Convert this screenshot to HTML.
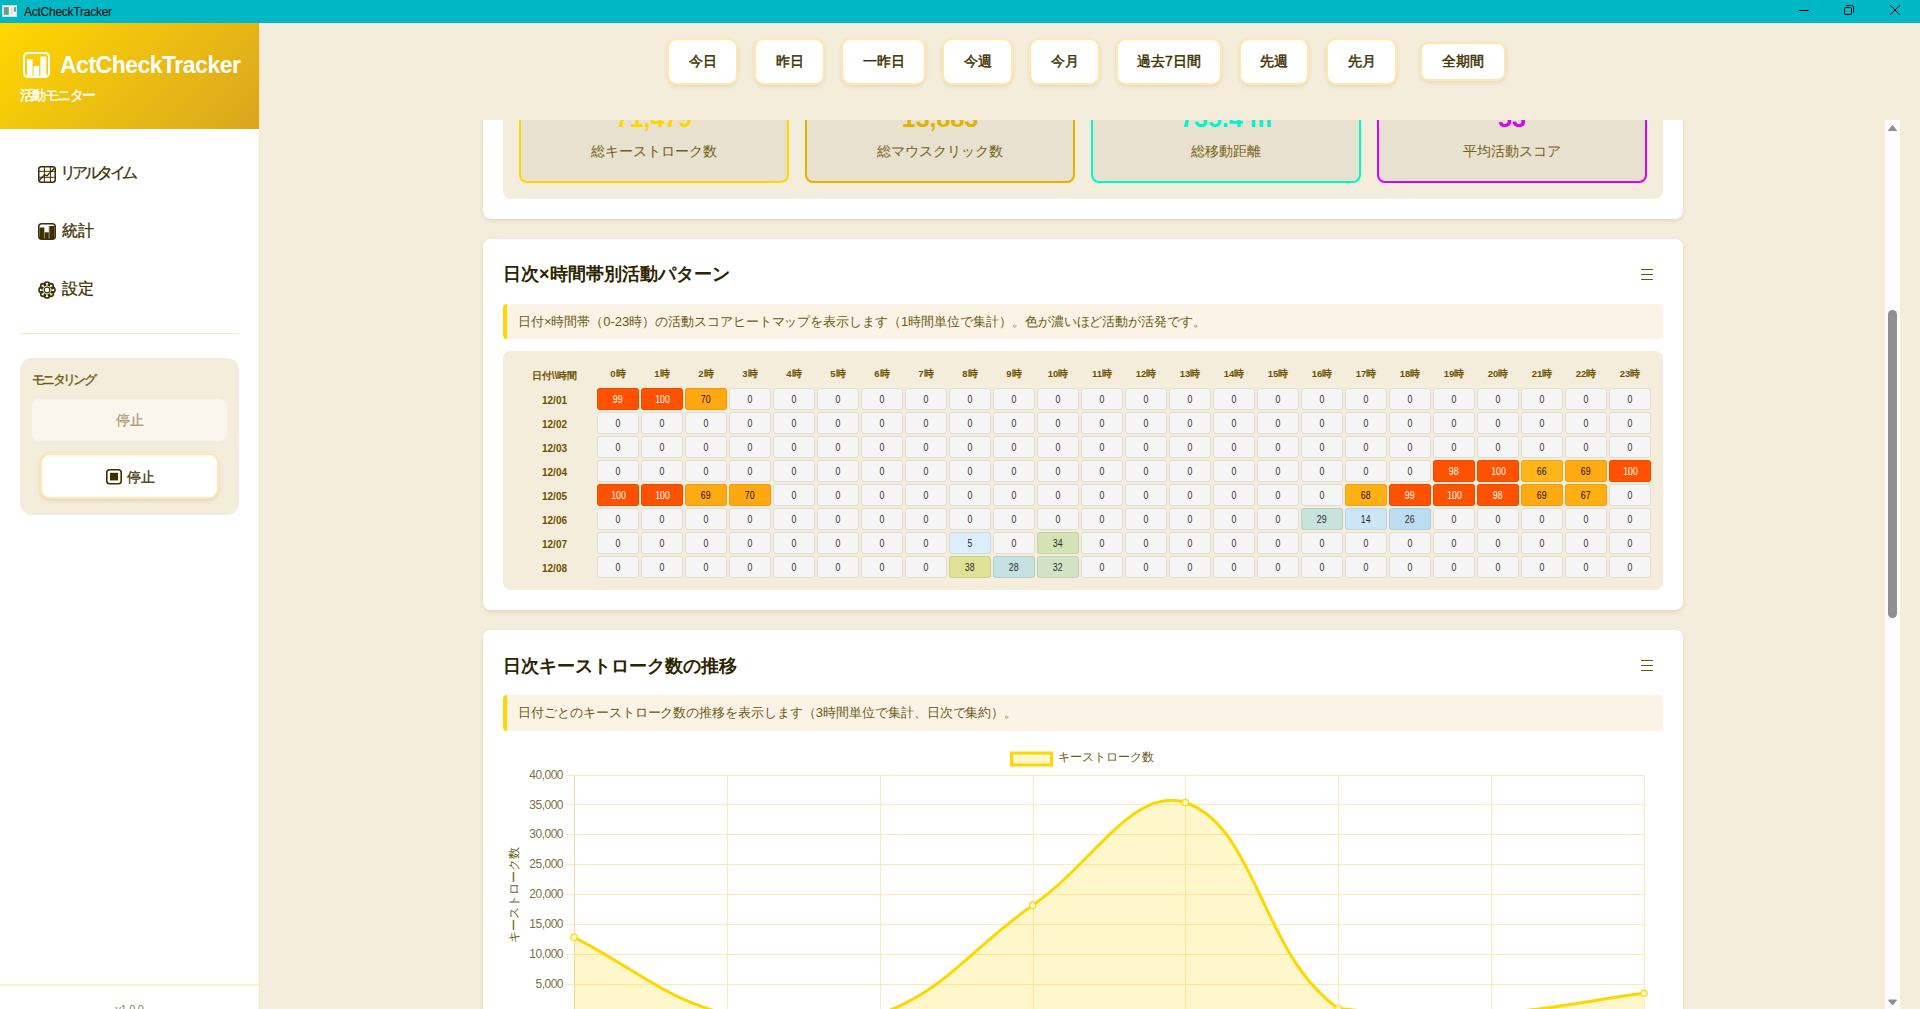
<!DOCTYPE html>
<html><head><meta charset="utf-8"><style>
*{box-sizing:border-box;margin:0;padding:0}
html,body{width:1920px;height:1009px;overflow:hidden;background:#F5EDDC;font-family:"Liberation Sans", sans-serif;}
.abs{position:absolute}
#titlebar{position:absolute;left:0;top:0;width:1920px;height:23px;background:#00B7C6}
#titlebar .t{position:absolute;left:24px;top:5px;font-size:12px;color:#000;letter-spacing:-0.25px}
#sidebar{position:absolute;left:0;top:23px;width:260px;height:986px;background:#fff;border-right:1px solid #FFE9B3}
#sbhead{position:absolute;left:0;top:0;width:259px;height:106px;background:linear-gradient(135deg,#FFD700 0%,#DAA520 100%)}
.brand{position:absolute;left:60px;top:29px;font-size:23px;font-weight:bold;color:#fff;letter-spacing:-0.5px}
.sub{position:absolute;left:20px;top:64px;font-size:14px;font-weight:normal;color:#fff;letter-spacing:-1.6px;-webkit-text-stroke:0.4px #fff}
.nav{position:absolute;left:62px;font-size:16px;font-weight:500;color:#3D3000;line-height:20px;-webkit-text-stroke:0.3px #3D3000}
.nic{position:absolute;left:38px}
#main{position:absolute;left:260px;top:23px;width:1660px;height:986px;background:#F5EDDC}
.pb{position:absolute;top:38px;height:47px;background:#fff;border:2px solid #FFE8B0;border-radius:10px;box-shadow:0 2px 4px rgba(120,90,0,0.12);font-size:14px;font-weight:normal;-webkit-text-stroke:0.45px #3D3000;color:#3D3000;text-align:center;line-height:43px}
.pb2{top:42px;height:39px;line-height:35px;border-radius:9px}
.card{position:absolute;left:483px;width:1200px;background:#fff;border-radius:8px;box-shadow:0 2px 4px rgba(90,70,20,0.13)}
.ctitle{position:absolute;left:503px;font-size:18px;font-weight:bold;color:#2D2400}
.info{position:absolute;left:503px;width:1160px;height:35px;background:#FAF3E6;border-left:4px solid #FFD700;border-radius:4px;font-size:13px;font-weight:500;color:#6B5A14;padding-left:11px;line-height:35px;letter-spacing:-0.05px}
.ham{position:absolute;left:1641px;width:12px;height:12px}
.ham i{position:absolute;left:0;width:12px;height:1.3px;background:#6B5200;border-radius:0.6px}
.stat{position:absolute;top:100px;width:270px;height:83px;background:#E9E1CF;border:2px solid;border-radius:8px}
.stat .v{position:absolute;left:0;right:0;top:2px;text-align:center;font-size:25px;font-weight:bold}
.stat .l{position:absolute;left:0;right:0;top:41px;text-align:center;font-size:14px;color:#72600F}
.hl{position:absolute;font-size:10px;font-weight:bold;color:#6B5200;text-align:center}
.hh{position:absolute;top:367.5px;font-size:9.5px;font-weight:bold;color:#6B5200;text-align:center}
.rl{position:absolute;left:513px;width:83px;height:22px;line-height:25px;font-size:10px;font-weight:bold;color:#6B5200;text-align:center}
.c{position:absolute;width:42px;height:22px;line-height:22px;border:1px solid #E2DDD3;border-radius:3px;font-size:10.2px;text-align:center;color:#333}
.c.z{background:#F5F5F5}
.c b{display:inline-block;font-weight:normal;transform:scaleX(0.86)}
</style></head><body>
<div id="titlebar">
  <svg class="abs" style="left:2px;top:5px" width="15" height="12" viewBox="0 0 15 12"><defs><linearGradient id="ig" x1="0" y1="0" x2="0.3" y2="1"><stop offset="0" stop-color="#6a8fc0"/><stop offset="1" stop-color="#5aa865"/></linearGradient></defs><rect x="0.5" y="0.5" width="14" height="11.3" fill="#f6f4f4" stroke="#e8d8d8" stroke-width="0.8"/><rect x="1.8" y="2.2" width="5" height="7.6" fill="url(#ig)"/><rect x="8.5" y="2" width="2.5" height="8" fill="#e2e2e2"/><rect x="11.9" y="2.2" width="2" height="4.5" fill="url(#ig)"/></svg>
  <div class="t">ActCheckTracker</div>
  <svg class="abs" style="left:1795px;top:0" width="125" height="23" viewBox="1795 0 125 23">
    <line x1="1799" y1="10.5" x2="1809" y2="10.5" stroke="#000" stroke-width="1"/>
    <rect x="1844.5" y="7.5" width="7" height="7" rx="1.2" fill="none" stroke="#000" stroke-width="1"/>
    <path d="M1846.5,5.5 H1852 a1.5,1.5 0 0 1 1.5,1.5 V12.5" fill="none" stroke="#000" stroke-width="1"/>
    <path d="M1890,5 L1900,15 M1900,5 L1890,15" stroke="#000" stroke-width="1"/>
  </svg>
</div>
<div id="sidebar">
  <div id="sbhead">
    <svg class="abs" style="left:23px;top:29px" width="27" height="26" viewBox="0 0 27 26"><rect x="1" y="1" width="25" height="24" rx="4" fill="none" stroke="#fff" stroke-width="2"/><rect x="4" y="7" width="5.6" height="17" fill="#fff"/><rect x="10.6" y="14" width="5.6" height="10" fill="#fff"/><rect x="17.4" y="4.5" width="6" height="19.5" fill="#fff"/></svg>
    <div class="brand">ActCheckTracker</div>
    <div class="sub">活動モニター</div>
  </div>
  <svg class="nic" style="top:143px" width="18" height="17" viewBox="0 0 18 17"><rect x="0.75" y="0.75" width="16.5" height="15.5" rx="2.5" fill="none" stroke="#3D3000" stroke-width="1.5"/><path d="M6.4,1 V16 M12.4,1 V16 M1,5.3 H17 M1,11.3 H17" stroke="#3D3000" stroke-width="1"/><path d="M1.2,14.5 L6.5,8.8 L9,9.8 L17,1.8" stroke="#3D3000" stroke-width="1.3" fill="none"/></svg>
  <div class="nav" style="top:140px;left:60px;letter-spacing:-3.6px">リアルタイム</div>
  <svg class="nic" style="top:200px" width="18" height="17" viewBox="0 0 18 17"><rect x="0.75" y="0.75" width="16.5" height="15.5" rx="3" fill="none" stroke="#3D3000" stroke-width="1.5"/><rect x="1.5" y="4.5" width="4.6" height="11.5" fill="#3D3000"/><rect x="6.6" y="9.3" width="4.2" height="6.7" fill="#3D3000"/><rect x="11.3" y="3" width="5.2" height="13" fill="#3D3000"/><path d="M6.35,4.5 V16 M11.05,3 V16" stroke="#7a6a40" stroke-width="0.5"/></svg>
  <div class="nav" style="top:198px">統計</div>
  <svg class="nic" style="top:258px" width="18" height="18" viewBox="0 0 18 18"><g fill="none" stroke="#3D3000" stroke-width="1.6"><circle cx="9" cy="9" r="3"/><circle cx="9" cy="3.6" r="2.6"/><circle cx="9" cy="14.4" r="2.6"/><circle cx="3.6" cy="9" r="2.6"/><circle cx="14.4" cy="9" r="2.6"/><circle cx="5.2" cy="5.2" r="2.6"/><circle cx="12.8" cy="5.2" r="2.6"/><circle cx="5.2" cy="12.8" r="2.6"/><circle cx="12.8" cy="12.8" r="2.6"/></g><circle cx="9" cy="9" r="4.2" fill="#fff"/><circle cx="9" cy="9" r="2.8" fill="none" stroke="#3D3000" stroke-width="1.2"/></svg>
  <div class="nav" style="top:256px">設定</div>
  <div class="abs" style="left:20px;top:310px;width:219px;height:1px;background:#FFE9B3"></div>
  <div class="abs" style="left:20px;top:335px;width:219px;height:157px;background:#F5EDDC;border-radius:12px"></div>
  <div class="abs" style="left:32px;top:348px;font-size:13px;font-weight:500;color:#6E5A12;letter-spacing:-2.7px;-webkit-text-stroke:0.35px #6E5A12">モニタリング</div>
  <div class="abs" style="left:32px;top:376px;width:195px;height:42px;background:#FAF6EE;border-radius:8px;text-align:center;line-height:42px;font-size:14px;font-weight:500;color:#A8996A;-webkit-text-stroke:0.25px #A8996A">停止</div>
  <div class="abs" style="left:40px;top:430px;width:179px;height:46px;background:#fff;border:2px solid #FFE8B0;border-radius:10px;box-shadow:0 2px 4px rgba(120,90,0,0.15)"></div>
  <svg class="abs" style="left:106px;top:446px" width="16" height="16" viewBox="0 0 16 16"><rect x="0.8" y="0.8" width="14.4" height="14" rx="2.8" fill="none" stroke="#3D3000" stroke-width="1.6"/><rect x="4" y="3.8" width="8" height="7.6" fill="#3D3000"/></svg>
  <div class="abs" style="left:127px;top:444px;font-size:14px;line-height:20px;color:#3D3000;font-weight:500;-webkit-text-stroke:0.3px #3D3000">停止</div>
  <div class="abs" style="left:0;top:961px;width:259px;height:2px;background:#FFF0CF"></div>
  <div class="abs" style="left:0;top:980px;width:259px;text-align:center;font-size:11px;color:#8C7F50;letter-spacing:-0.3px">v1.0.0</div>
</div>
<div id="main"></div>
<div class="pb" style="left:667px;width:71px">今日</div><div class="pb" style="left:754px;width:71px">昨日</div><div class="pb" style="left:841px;width:85px">一昨日</div><div class="pb" style="left:942px;width:71px">今週</div><div class="pb" style="left:1029px;width:71px">今月</div><div class="pb" style="left:1116px;width:106px">過去7日間</div><div class="pb" style="left:1239px;width:70px">先週</div><div class="pb" style="left:1326px;width:71px">先月</div><div class="pb pb2" style="left:1420px;width:86px">全期間</div>
<div class="abs" style="left:260px;top:120px;width:1660px;height:889px;overflow:hidden">
 <div class="abs" style="left:-260px;top:-120px;width:1920px;height:1009px">
  <div class="card" style="top:60px;height:159px"></div>
  <div class="abs" style="left:503px;top:80px;width:1160px;height:119px;background:#F5EDDC;border-radius:8px"></div>
  <div class="stat" style="left:519px;border-color:#FFD700"><div class="v" style="color:#FFD700">71,479</div><div class="l">総キーストローク数</div></div>
  <div class="stat" style="left:805px;border-color:#E0B400"><div class="v" style="color:#E0B400">13,883</div><div class="l">総マウスクリック数</div></div>
  <div class="stat" style="left:1091px;border-color:#00F5D0"><div class="v" style="color:#00F5D0">735.4 m</div><div class="l">総移動距離</div></div>
  <div class="stat" style="left:1377px;border-color:#D800F5"><div class="v" style="color:#D800F5">53</div><div class="l">平均活動スコア</div></div>

  <div class="card" style="top:239px;height:371px"></div>
  <div class="ctitle" style="top:262px">日次×時間帯別活動パターン</div>
  <div class="ham" style="top:268px"><i style="top:0.85px"></i><i style="top:5.85px"></i><i style="top:10.85px"></i></div>
  <div class="info" style="top:304px">日付×時間帯（0-23時）の活動スコアヒートマップを表示します（1時間単位で集計）。色が濃いほど活動が活発です。</div>
  <div class="abs" style="left:503px;top:351px;width:1160px;height:239px;background:#F5EDDC;border-radius:8px"></div>
  <div class="hl" style="left:513px;top:367px;width:83px;top:369px">日付\\時間</div>
<div class="hh" style="left:597px;width:42px">0時</div>
<div class="hh" style="left:641px;width:42px">1時</div>
<div class="hh" style="left:685px;width:42px">2時</div>
<div class="hh" style="left:729px;width:42px">3時</div>
<div class="hh" style="left:773px;width:42px">4時</div>
<div class="hh" style="left:817px;width:42px">5時</div>
<div class="hh" style="left:861px;width:42px">6時</div>
<div class="hh" style="left:905px;width:42px">7時</div>
<div class="hh" style="left:949px;width:42px">8時</div>
<div class="hh" style="left:993px;width:42px">9時</div>
<div class="hh" style="left:1037px;width:42px">10時</div>
<div class="hh" style="left:1081px;width:42px">11時</div>
<div class="hh" style="left:1125px;width:42px">12時</div>
<div class="hh" style="left:1169px;width:42px">13時</div>
<div class="hh" style="left:1213px;width:42px">14時</div>
<div class="hh" style="left:1257px;width:42px">15時</div>
<div class="hh" style="left:1301px;width:42px">16時</div>
<div class="hh" style="left:1345px;width:42px">17時</div>
<div class="hh" style="left:1389px;width:42px">18時</div>
<div class="hh" style="left:1433px;width:42px">19時</div>
<div class="hh" style="left:1477px;width:42px">20時</div>
<div class="hh" style="left:1521px;width:42px">21時</div>
<div class="hh" style="left:1565px;width:42px">22時</div>
<div class="hh" style="left:1609px;width:42px">23時</div>
<div class="rl" style="top:388px">12/01</div>
<div class="c" style="left:597px;top:388px;background:#FF5200;color:#fff;border-color:rgba(0,0,0,0.07)"><b>99</b></div>
<div class="c" style="left:641px;top:388px;background:#FF5200;color:#fff;border-color:rgba(0,0,0,0.07)"><b>100</b></div>
<div class="c" style="left:685px;top:388px;background:#FFA812;color:#141000;border-color:rgba(0,0,0,0.07)"><b>70</b></div>
<div class="c z" style="left:729px;top:388px"><b>0</b></div>
<div class="c z" style="left:773px;top:388px"><b>0</b></div>
<div class="c z" style="left:817px;top:388px"><b>0</b></div>
<div class="c z" style="left:861px;top:388px"><b>0</b></div>
<div class="c z" style="left:905px;top:388px"><b>0</b></div>
<div class="c z" style="left:949px;top:388px"><b>0</b></div>
<div class="c z" style="left:993px;top:388px"><b>0</b></div>
<div class="c z" style="left:1037px;top:388px"><b>0</b></div>
<div class="c z" style="left:1081px;top:388px"><b>0</b></div>
<div class="c z" style="left:1125px;top:388px"><b>0</b></div>
<div class="c z" style="left:1169px;top:388px"><b>0</b></div>
<div class="c z" style="left:1213px;top:388px"><b>0</b></div>
<div class="c z" style="left:1257px;top:388px"><b>0</b></div>
<div class="c z" style="left:1301px;top:388px"><b>0</b></div>
<div class="c z" style="left:1345px;top:388px"><b>0</b></div>
<div class="c z" style="left:1389px;top:388px"><b>0</b></div>
<div class="c z" style="left:1433px;top:388px"><b>0</b></div>
<div class="c z" style="left:1477px;top:388px"><b>0</b></div>
<div class="c z" style="left:1521px;top:388px"><b>0</b></div>
<div class="c z" style="left:1565px;top:388px"><b>0</b></div>
<div class="c z" style="left:1609px;top:388px"><b>0</b></div>
<div class="rl" style="top:412px">12/02</div>
<div class="c z" style="left:597px;top:412px"><b>0</b></div>
<div class="c z" style="left:641px;top:412px"><b>0</b></div>
<div class="c z" style="left:685px;top:412px"><b>0</b></div>
<div class="c z" style="left:729px;top:412px"><b>0</b></div>
<div class="c z" style="left:773px;top:412px"><b>0</b></div>
<div class="c z" style="left:817px;top:412px"><b>0</b></div>
<div class="c z" style="left:861px;top:412px"><b>0</b></div>
<div class="c z" style="left:905px;top:412px"><b>0</b></div>
<div class="c z" style="left:949px;top:412px"><b>0</b></div>
<div class="c z" style="left:993px;top:412px"><b>0</b></div>
<div class="c z" style="left:1037px;top:412px"><b>0</b></div>
<div class="c z" style="left:1081px;top:412px"><b>0</b></div>
<div class="c z" style="left:1125px;top:412px"><b>0</b></div>
<div class="c z" style="left:1169px;top:412px"><b>0</b></div>
<div class="c z" style="left:1213px;top:412px"><b>0</b></div>
<div class="c z" style="left:1257px;top:412px"><b>0</b></div>
<div class="c z" style="left:1301px;top:412px"><b>0</b></div>
<div class="c z" style="left:1345px;top:412px"><b>0</b></div>
<div class="c z" style="left:1389px;top:412px"><b>0</b></div>
<div class="c z" style="left:1433px;top:412px"><b>0</b></div>
<div class="c z" style="left:1477px;top:412px"><b>0</b></div>
<div class="c z" style="left:1521px;top:412px"><b>0</b></div>
<div class="c z" style="left:1565px;top:412px"><b>0</b></div>
<div class="c z" style="left:1609px;top:412px"><b>0</b></div>
<div class="rl" style="top:436px">12/03</div>
<div class="c z" style="left:597px;top:436px"><b>0</b></div>
<div class="c z" style="left:641px;top:436px"><b>0</b></div>
<div class="c z" style="left:685px;top:436px"><b>0</b></div>
<div class="c z" style="left:729px;top:436px"><b>0</b></div>
<div class="c z" style="left:773px;top:436px"><b>0</b></div>
<div class="c z" style="left:817px;top:436px"><b>0</b></div>
<div class="c z" style="left:861px;top:436px"><b>0</b></div>
<div class="c z" style="left:905px;top:436px"><b>0</b></div>
<div class="c z" style="left:949px;top:436px"><b>0</b></div>
<div class="c z" style="left:993px;top:436px"><b>0</b></div>
<div class="c z" style="left:1037px;top:436px"><b>0</b></div>
<div class="c z" style="left:1081px;top:436px"><b>0</b></div>
<div class="c z" style="left:1125px;top:436px"><b>0</b></div>
<div class="c z" style="left:1169px;top:436px"><b>0</b></div>
<div class="c z" style="left:1213px;top:436px"><b>0</b></div>
<div class="c z" style="left:1257px;top:436px"><b>0</b></div>
<div class="c z" style="left:1301px;top:436px"><b>0</b></div>
<div class="c z" style="left:1345px;top:436px"><b>0</b></div>
<div class="c z" style="left:1389px;top:436px"><b>0</b></div>
<div class="c z" style="left:1433px;top:436px"><b>0</b></div>
<div class="c z" style="left:1477px;top:436px"><b>0</b></div>
<div class="c z" style="left:1521px;top:436px"><b>0</b></div>
<div class="c z" style="left:1565px;top:436px"><b>0</b></div>
<div class="c z" style="left:1609px;top:436px"><b>0</b></div>
<div class="rl" style="top:460px">12/04</div>
<div class="c z" style="left:597px;top:460px"><b>0</b></div>
<div class="c z" style="left:641px;top:460px"><b>0</b></div>
<div class="c z" style="left:685px;top:460px"><b>0</b></div>
<div class="c z" style="left:729px;top:460px"><b>0</b></div>
<div class="c z" style="left:773px;top:460px"><b>0</b></div>
<div class="c z" style="left:817px;top:460px"><b>0</b></div>
<div class="c z" style="left:861px;top:460px"><b>0</b></div>
<div class="c z" style="left:905px;top:460px"><b>0</b></div>
<div class="c z" style="left:949px;top:460px"><b>0</b></div>
<div class="c z" style="left:993px;top:460px"><b>0</b></div>
<div class="c z" style="left:1037px;top:460px"><b>0</b></div>
<div class="c z" style="left:1081px;top:460px"><b>0</b></div>
<div class="c z" style="left:1125px;top:460px"><b>0</b></div>
<div class="c z" style="left:1169px;top:460px"><b>0</b></div>
<div class="c z" style="left:1213px;top:460px"><b>0</b></div>
<div class="c z" style="left:1257px;top:460px"><b>0</b></div>
<div class="c z" style="left:1301px;top:460px"><b>0</b></div>
<div class="c z" style="left:1345px;top:460px"><b>0</b></div>
<div class="c z" style="left:1389px;top:460px"><b>0</b></div>
<div class="c" style="left:1433px;top:460px;background:#FF5200;color:#fff;border-color:rgba(0,0,0,0.07)"><b>98</b></div>
<div class="c" style="left:1477px;top:460px;background:#FF5200;color:#fff;border-color:rgba(0,0,0,0.07)"><b>100</b></div>
<div class="c" style="left:1521px;top:460px;background:#FFB61A;color:#141000;border-color:rgba(0,0,0,0.07)"><b>66</b></div>
<div class="c" style="left:1565px;top:460px;background:#FFAA12;color:#141000;border-color:rgba(0,0,0,0.07)"><b>69</b></div>
<div class="c" style="left:1609px;top:460px;background:#FF5200;color:#fff;border-color:rgba(0,0,0,0.07)"><b>100</b></div>
<div class="rl" style="top:484px">12/05</div>
<div class="c" style="left:597px;top:484px;background:#FF5200;color:#fff;border-color:rgba(0,0,0,0.07)"><b>100</b></div>
<div class="c" style="left:641px;top:484px;background:#FF5200;color:#fff;border-color:rgba(0,0,0,0.07)"><b>100</b></div>
<div class="c" style="left:685px;top:484px;background:#FFAA12;color:#141000;border-color:rgba(0,0,0,0.07)"><b>69</b></div>
<div class="c" style="left:729px;top:484px;background:#FFA812;color:#141000;border-color:rgba(0,0,0,0.07)"><b>70</b></div>
<div class="c z" style="left:773px;top:484px"><b>0</b></div>
<div class="c z" style="left:817px;top:484px"><b>0</b></div>
<div class="c z" style="left:861px;top:484px"><b>0</b></div>
<div class="c z" style="left:905px;top:484px"><b>0</b></div>
<div class="c z" style="left:949px;top:484px"><b>0</b></div>
<div class="c z" style="left:993px;top:484px"><b>0</b></div>
<div class="c z" style="left:1037px;top:484px"><b>0</b></div>
<div class="c z" style="left:1081px;top:484px"><b>0</b></div>
<div class="c z" style="left:1125px;top:484px"><b>0</b></div>
<div class="c z" style="left:1169px;top:484px"><b>0</b></div>
<div class="c z" style="left:1213px;top:484px"><b>0</b></div>
<div class="c z" style="left:1257px;top:484px"><b>0</b></div>
<div class="c z" style="left:1301px;top:484px"><b>0</b></div>
<div class="c" style="left:1345px;top:484px;background:#FFB014;color:#141000;border-color:rgba(0,0,0,0.07)"><b>68</b></div>
<div class="c" style="left:1389px;top:484px;background:#FF5200;color:#fff;border-color:rgba(0,0,0,0.07)"><b>99</b></div>
<div class="c" style="left:1433px;top:484px;background:#FF5200;color:#fff;border-color:rgba(0,0,0,0.07)"><b>100</b></div>
<div class="c" style="left:1477px;top:484px;background:#FF5200;color:#fff;border-color:rgba(0,0,0,0.07)"><b>98</b></div>
<div class="c" style="left:1521px;top:484px;background:#FFAA12;color:#141000;border-color:rgba(0,0,0,0.07)"><b>69</b></div>
<div class="c" style="left:1565px;top:484px;background:#FFAE14;color:#141000;border-color:rgba(0,0,0,0.07)"><b>67</b></div>
<div class="c z" style="left:1609px;top:484px"><b>0</b></div>
<div class="rl" style="top:508px">12/06</div>
<div class="c z" style="left:597px;top:508px"><b>0</b></div>
<div class="c z" style="left:641px;top:508px"><b>0</b></div>
<div class="c z" style="left:685px;top:508px"><b>0</b></div>
<div class="c z" style="left:729px;top:508px"><b>0</b></div>
<div class="c z" style="left:773px;top:508px"><b>0</b></div>
<div class="c z" style="left:817px;top:508px"><b>0</b></div>
<div class="c z" style="left:861px;top:508px"><b>0</b></div>
<div class="c z" style="left:905px;top:508px"><b>0</b></div>
<div class="c z" style="left:949px;top:508px"><b>0</b></div>
<div class="c z" style="left:993px;top:508px"><b>0</b></div>
<div class="c z" style="left:1037px;top:508px"><b>0</b></div>
<div class="c z" style="left:1081px;top:508px"><b>0</b></div>
<div class="c z" style="left:1125px;top:508px"><b>0</b></div>
<div class="c z" style="left:1169px;top:508px"><b>0</b></div>
<div class="c z" style="left:1213px;top:508px"><b>0</b></div>
<div class="c z" style="left:1257px;top:508px"><b>0</b></div>
<div class="c" style="left:1301px;top:508px;background:#C8E2DC;color:#2b2b2b;border-color:rgba(0,0,0,0.07)"><b>29</b></div>
<div class="c" style="left:1345px;top:508px;background:#CCE6F8;color:#2b2b2b;border-color:rgba(0,0,0,0.07)"><b>14</b></div>
<div class="c" style="left:1389px;top:508px;background:#BCDDEF;color:#2b2b2b;border-color:rgba(0,0,0,0.07)"><b>26</b></div>
<div class="c z" style="left:1433px;top:508px"><b>0</b></div>
<div class="c z" style="left:1477px;top:508px"><b>0</b></div>
<div class="c z" style="left:1521px;top:508px"><b>0</b></div>
<div class="c z" style="left:1565px;top:508px"><b>0</b></div>
<div class="c z" style="left:1609px;top:508px"><b>0</b></div>
<div class="rl" style="top:532px">12/07</div>
<div class="c z" style="left:597px;top:532px"><b>0</b></div>
<div class="c z" style="left:641px;top:532px"><b>0</b></div>
<div class="c z" style="left:685px;top:532px"><b>0</b></div>
<div class="c z" style="left:729px;top:532px"><b>0</b></div>
<div class="c z" style="left:773px;top:532px"><b>0</b></div>
<div class="c z" style="left:817px;top:532px"><b>0</b></div>
<div class="c z" style="left:861px;top:532px"><b>0</b></div>
<div class="c z" style="left:905px;top:532px"><b>0</b></div>
<div class="c" style="left:949px;top:532px;background:#DCEEFB;color:#2b2b2b;border-color:rgba(0,0,0,0.07)"><b>5</b></div>
<div class="c z" style="left:993px;top:532px"><b>0</b></div>
<div class="c" style="left:1037px;top:532px;background:#D4E3B5;color:#2b2b2b;border-color:rgba(0,0,0,0.07)"><b>34</b></div>
<div class="c z" style="left:1081px;top:532px"><b>0</b></div>
<div class="c z" style="left:1125px;top:532px"><b>0</b></div>
<div class="c z" style="left:1169px;top:532px"><b>0</b></div>
<div class="c z" style="left:1213px;top:532px"><b>0</b></div>
<div class="c z" style="left:1257px;top:532px"><b>0</b></div>
<div class="c z" style="left:1301px;top:532px"><b>0</b></div>
<div class="c z" style="left:1345px;top:532px"><b>0</b></div>
<div class="c z" style="left:1389px;top:532px"><b>0</b></div>
<div class="c z" style="left:1433px;top:532px"><b>0</b></div>
<div class="c z" style="left:1477px;top:532px"><b>0</b></div>
<div class="c z" style="left:1521px;top:532px"><b>0</b></div>
<div class="c z" style="left:1565px;top:532px"><b>0</b></div>
<div class="c z" style="left:1609px;top:532px"><b>0</b></div>
<div class="rl" style="top:556px">12/08</div>
<div class="c z" style="left:597px;top:556px"><b>0</b></div>
<div class="c z" style="left:641px;top:556px"><b>0</b></div>
<div class="c z" style="left:685px;top:556px"><b>0</b></div>
<div class="c z" style="left:729px;top:556px"><b>0</b></div>
<div class="c z" style="left:773px;top:556px"><b>0</b></div>
<div class="c z" style="left:817px;top:556px"><b>0</b></div>
<div class="c z" style="left:861px;top:556px"><b>0</b></div>
<div class="c z" style="left:905px;top:556px"><b>0</b></div>
<div class="c" style="left:949px;top:556px;background:#DEE296;color:#2b2b2b;border-color:rgba(0,0,0,0.07)"><b>38</b></div>
<div class="c" style="left:993px;top:556px;background:#C4E0E0;color:#2b2b2b;border-color:rgba(0,0,0,0.07)"><b>28</b></div>
<div class="c" style="left:1037px;top:556px;background:#D2E3C5;color:#2b2b2b;border-color:rgba(0,0,0,0.07)"><b>32</b></div>
<div class="c z" style="left:1081px;top:556px"><b>0</b></div>
<div class="c z" style="left:1125px;top:556px"><b>0</b></div>
<div class="c z" style="left:1169px;top:556px"><b>0</b></div>
<div class="c z" style="left:1213px;top:556px"><b>0</b></div>
<div class="c z" style="left:1257px;top:556px"><b>0</b></div>
<div class="c z" style="left:1301px;top:556px"><b>0</b></div>
<div class="c z" style="left:1345px;top:556px"><b>0</b></div>
<div class="c z" style="left:1389px;top:556px"><b>0</b></div>
<div class="c z" style="left:1433px;top:556px"><b>0</b></div>
<div class="c z" style="left:1477px;top:556px"><b>0</b></div>
<div class="c z" style="left:1521px;top:556px"><b>0</b></div>
<div class="c z" style="left:1565px;top:556px"><b>0</b></div>
<div class="c z" style="left:1609px;top:556px"><b>0</b></div>

  <div class="card" style="top:630px;height:500px"></div>
  <div class="ctitle" style="top:654px">日次キーストローク数の推移</div>
  <div class="ham" style="top:659px"><i style="top:0.85px"></i><i style="top:5.85px"></i><i style="top:10.85px"></i></div>
  <div class="info" style="top:695px;height:36px;line-height:36px">日付ごとのキーストローク数の推移を表示します（3時間単位で集計、日次で集約）。</div>
  <svg class="chart" width="1920" height="1009" viewBox="0 0 1920 1009" style="position:absolute;left:0;top:0">
<g stroke="#FFEAB5" stroke-width="1" fill="none"><line x1="566" y1="775.5" x2="1644" y2="775.5" /><line x1="566" y1="804.5" x2="1644" y2="804.5" /><line x1="566" y1="834.5" x2="1644" y2="834.5" /><line x1="566" y1="864.5" x2="1644" y2="864.5" /><line x1="566" y1="894.5" x2="1644" y2="894.5" /><line x1="566" y1="924.5" x2="1644" y2="924.5" /><line x1="566" y1="954.5" x2="1644" y2="954.5" /><line x1="566" y1="984.5" x2="1644" y2="984.5" /><line x1="566" y1="1014.5" x2="1644" y2="1014.5" /><line x1="574.5" y1="775" x2="574.5" y2="1020" /><line x1="727.5" y1="775" x2="727.5" y2="1020" /><line x1="880.5" y1="775" x2="880.5" y2="1020" /><line x1="1033.5" y1="775" x2="1033.5" y2="1020" /><line x1="1185.5" y1="775" x2="1185.5" y2="1020" /><line x1="1338.5" y1="775" x2="1338.5" y2="1020" /><line x1="1491.5" y1="775" x2="1491.5" y2="1020" /><line x1="1644.5" y1="775" x2="1644.5" y2="1020" /></g>
<line x1="574.5" y1="775" x2="574.5" y2="1020" stroke="#F2DCA0" stroke-width="1"/>
<g font-family='"Liberation Sans", sans-serif' font-size="12" fill="#7D7040" letter-spacing="-0.5"><text x="563" y="778.60" text-anchor="end">40,000</text><text x="563" y="808.50" text-anchor="end">35,000</text><text x="563" y="838.40" text-anchor="end">30,000</text><text x="563" y="868.30" text-anchor="end">25,000</text><text x="563" y="898.20" text-anchor="end">20,000</text><text x="563" y="928.10" text-anchor="end">15,000</text><text x="563" y="958.00" text-anchor="end">10,000</text><text x="563" y="987.90" text-anchor="end">5,000</text></g>
<text transform="translate(518,895) rotate(-90)" text-anchor="middle" font-family='"Liberation Sans", sans-serif' font-size="12" fill="#6E6020">キーストローク数</text>
<path d="M574.00,937.30 C635.14,968.06 662.27,997.95 726.86,1014.20 C784.55,1014.20 824.82,1014.20 879.71,1014.20 C947.10,990.21 970.87,948.09 1032.57,905.36 C1093.15,863.41 1134.29,785.30 1185.43,802.51 C1256.57,826.44 1261.70,955.49 1338.29,1008.22 C1383.99,1014.20 1430.24,1014.20 1491.14,1013.00 C1552.52,1010.00 1582.86,1001.16 1644.00,993.27 L1644,1014.20 L574,1014.20 Z" fill="rgba(255,215,0,0.2)" stroke="none"/>
<path d="M574.00,937.30 C635.14,968.06 662.27,997.95 726.86,1014.20 C784.55,1014.20 824.82,1014.20 879.71,1014.20 C947.10,990.21 970.87,948.09 1032.57,905.36 C1093.15,863.41 1134.29,785.30 1185.43,802.51 C1256.57,826.44 1261.70,955.49 1338.29,1008.22 C1383.99,1014.20 1430.24,1014.20 1491.14,1013.00 C1552.52,1010.00 1582.86,1001.16 1644.00,993.27" fill="none" stroke="#FFD700" stroke-width="3"/>
<g fill="#FFF6D0" stroke="#FFD700" stroke-width="1.2"><circle cx="574.00" cy="937.30" r="3.2" /><circle cx="726.86" cy="1014.20" r="3.2" /><circle cx="879.71" cy="1014.20" r="3.2" /><circle cx="1032.57" cy="905.36" r="3.2" /><circle cx="1185.43" cy="802.51" r="3.2" /><circle cx="1338.29" cy="1008.22" r="3.2" /><circle cx="1491.14" cy="1013.00" r="3.2" /><circle cx="1644.00" cy="993.27" r="3.2" /></g>
<rect x="1011.5" y="753" width="40" height="12" fill="#FFF6CC" stroke="#FFD700" stroke-width="3"/>
<text x="1058" y="761.2" font-family='"Liberation Sans", sans-serif' font-size="12" fill="#6E5A18">キーストローク数</text>
</svg>
 </div>
</div>
<div class="abs" style="left:1885px;top:120px;width:15px;height:889px;background:#FCFCFC"></div>
<div class="abs" style="left:1888px;top:310px;width:9px;height:308px;background:#8F8F8F;border-radius:5px"></div>
<svg class="abs" style="left:1885px;top:120px" width="15" height="889" viewBox="0 0 15 889"><path d="M3.5,10.5 L7.5,5.5 L11.5,10.5 Z" fill="#8F8F8F" stroke="#8F8F8F" stroke-width="1" stroke-linejoin="round"/><path d="M3.5,880 L7.5,885 L11.5,880 Z" fill="#8F8F8F" stroke="#8F8F8F" stroke-width="1" stroke-linejoin="round"/></svg>
</body></html>
